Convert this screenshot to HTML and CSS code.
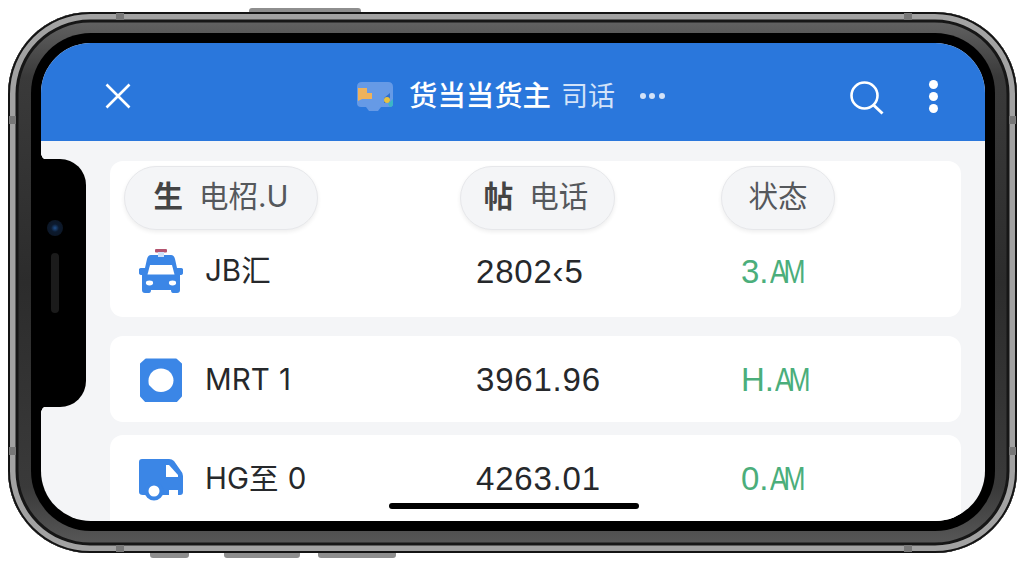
FILE: index.html
```html
<!DOCTYPE html>
<html lang="zh">
<head>
    <meta charset="UTF-8">
    <meta name="viewport" content="width=device-width, initial-scale=1.0">
    <link rel="stylesheet" href="styles.css">
    <title>货当当货主 司话</title>
</head>
<body>
    <div class="phone">
        <span class="side-btn btn-top"></span>
        <span class="side-btn btn-bottom-1"></span>
        <span class="side-btn btn-bottom-2"></span>
        <span class="side-btn btn-bottom-3"></span>
        <span class="band band-h band-t1"></span>
        <span class="band band-h band-t2"></span>
        <span class="band band-h band-b1"></span>
        <span class="band band-h band-b2"></span>
        <span class="band band-v band-l1"></span>
        <span class="band band-v band-l2"></span>
        <span class="band band-v band-r1"></span>
        <span class="band band-v band-r2"></span>

        <div class="screen">
            <header class="app-bar">
                <svg class="icon-close" viewBox="0 0 26 26" width="26" height="26">
                    <path d="M1.5 1.5 L24.5 24.5 M24.5 1.5 L1.5 24.5" stroke="#fff" stroke-width="2.6" fill="none"/>
                </svg>
                <svg class="logo" viewBox="0 0 36 29" width="36" height="29">
                    <path d="M5 0 H31 Q36 0 36 5 V22 Q36 25 32 25 H24 L21 29 H12 L9 25 H4 Q0 25 0 21 V5 Q0 0 5 0 Z" fill="#669ae6"/>
                    <path d="M1 6 H10 V11 H15 V17 H5 L1 19 Z" fill="#eeb25c"/>
                    <path d="M27 16 L33 11 V20 L27 21 Z" fill="#2f6fd0"/>
                    <circle cx="30" cy="18" r="3" fill="#e8c23e"/>
                    <path d="M31 22 L36 17 V22 Q36 25 33 25 Z" fill="#3cb6c6"/>
                </svg>
                <span class="title">货当当货主</span>
                <span class="subtitle">司话</span>
                <span class="more-dots"><i></i><i></i><i></i></span>
                <svg class="icon-search" viewBox="0 0 34 34" width="34" height="34">
                    <circle cx="14.5" cy="14.5" r="13" stroke="#fff" stroke-width="2.6" fill="none"/>
                    <path d="M23.5 24 L32.5 32.5" stroke="#fff" stroke-width="3" fill="none"/>
                </svg>
                <span class="kebab"><i></i><i></i><i></i></span>
            </header>

            <main class="content">
                <section class="card card-first">
                    <div class="pill-row">
                        <div class="pill pill-driver"><b>生</b>电柖.U</div>
                        <div class="pill pill-phone"><b>帖</b>电话</div>
                        <div class="pill pill-status">状态</div>
                    </div>
                    <div class="row row-first">
                        <div class="name">
                            <svg class="row-icon" viewBox="0 0 44 44" width="44" height="44">
                                <rect x="16" y="0" width="12" height="3.5" rx="1" fill="#b4546f"/>
                                <path d="M12 6 H32 Q35 6 36 10 L38 19 H42 Q45 19 44 24 Q44 26 41 26 V41 Q41 44 38 44 H34 Q32 44 32 41 H12 Q12 44 10 44 H6 Q3 44 3 41 V26 Q0 26 0 24 Q-1 19 2 19 H6 L8 10 Q9 6 12 6 Z" fill="#3b86e6"/>
                                <rect x="19" y="3" width="6" height="5" fill="#cfe2fa"/>
                                <path d="M11 16 H33 L35.500 25.500 H8.500 Z" fill="#fff"/>
                                <ellipse cx="10.5" cy="34" rx="3.6" ry="2.4" fill="#fff"/>
                                <ellipse cx="33.5" cy="34" rx="3.6" ry="2.4" fill="#fff"/>
                            </svg>
                            <span>JB汇</span>
                        </div>
                        <div class="amount">2802‹5</div>
                        <div class="status">3.<span class="am">AM</span></div>
                    </div>
                </section>

                <section class="card">
                    <div class="row">
                        <div class="name">
                            <svg class="row-icon" viewBox="0 0 44 44" width="44" height="44">
                                <path d="M7 1.500 H37 L42 6 V38 L37 43.500 H7 L2 38 V6 Z" fill="#3b86e6" stroke="#3b86e6" stroke-width="2" stroke-linejoin="round"/>
                                <path d="M22 10.500 C29 10.500 34.500 16 34.500 22.500 C34.500 29 29 34 22 34 C18 34 16 33 14 31 L10 27 C9.500 25 9.500 24 9.500 22.500 C9.500 16 15 10.500 22 10.500 Z" fill="#fff"/>
                            </svg>
                            <span>MRT 1</span>
                        </div>
                        <div class="amount">3961.96</div>
                        <div class="status">H.<span class="am">AM</span></div>
                    </div>
                </section>

                <section class="card card-last">
                    <div class="row">
                        <div class="name">
                            <svg class="row-icon" viewBox="0 0 44 44" width="44" height="44">
                                <path d="M3 2 H30 Q33 2 35 4 L42 14 Q44 16 44 19 V35 Q44 38 41 38 H4 Q0 38 0 35 V5 Q0 2 3 2 Z" fill="#3b86e6"/>
                                <path d="M27 8 H30 L39 18 V20 H27 Z" fill="#fff"/>
                                <rect x="30" y="33" width="9" height="6" fill="#fff"/>
                                <circle cx="15" cy="34" r="9.500" fill="#3b86e6"/>
                                <circle cx="15" cy="34" r="5.500" fill="#fff"/>
                            </svg>
                            <span>HG至 0</span>
                        </div>
                        <div class="amount">4263.01</div>
                        <div class="status">0.<span class="am">AM</span></div>
                    </div>
                </section>
            </main>

            <div class="notch">
                <span class="camera"></span>
                <span class="speaker"></span>
            </div>
            <div class="home-bar"></div>
        </div>
    </div>
</body>
</html>
```

FILE: styles.css
```css
* {
    box-sizing: border-box;
}

body {
    margin: 0;
    width: 1024px;
    height: 576px;
    overflow: hidden;
    background-color: #fff;
    font-family: Inter, "Noto Sans CJK SC", sans-serif;
}

/* device frame */
.phone {
    position: relative;
    width: 1009px;
    height: 541px;
    margin: 12px 0 0 8px;
    padding: 31px 32px 32px 33px;
    border-radius: 82px;
    background: linear-gradient(#686868 0, #3a3a3a 12%, #2c2c2c 50%, #3a3a3a 88%, #5c5c5c 100%);
    box-shadow:
        inset 0 0 0 2px #141414,
        inset 0 0 0 7.5px #a2a2a2,
        inset 0 0 0 10.5px #161616;
}

.side-btn {
    position: absolute;
    background-color: #8e8e8e;
    z-index: -1;
}

.btn-top {
    left: 241px;
    top: -4px;
    width: 112px;
    height: 8px;
    border-radius: 3px 3px 0 0;
}

.btn-bottom-1,
.btn-bottom-2,
.btn-bottom-3 {
    bottom: -5px;
    height: 9px;
    border-radius: 0 0 3px 3px;
}

.btn-bottom-1 {
    left: 142px;
    width: 39px;
}

.btn-bottom-2 {
    left: 216px;
    width: 76px;
}

.btn-bottom-3 {
    left: 310px;
    width: 78px;
}

.band {
    position: absolute;
    background-color: #777;
}

.band-h {
    width: 8px;
    height: 7px;
}

.band-v {
    width: 7px;
    height: 8px;
}

.band-t1 { left: 108px; top: 1px; }
.band-t2 { left: 896px; top: 1px; }
.band-b1 { left: 108px; bottom: 1px; }
.band-b2 { left: 896px; bottom: 1px; }
.band-l1 { left: 1px; top: 104px; }
.band-l2 { left: 1px; top: 435px; }
.band-r1 { right: 1px; top: 104px; }
.band-r2 { right: 1px; top: 435px; }

.screen {
    position: relative;
    width: 944px;
    height: 478px;
    border-radius: 50px;
    overflow: hidden;
    background-color: #f4f5f7;
    box-shadow: 0 0 0 10px #000;
}

/* blue top bar */
.app-bar {
    display: flex;
    align-items: center;
    height: 98px;
    padding: 8px 47px 0 64px;
    background-color: #2a77dc;
    color: #fff;
    line-height: 1;
}

.logo {
    margin-left: 226px;
}

.title {
    margin-left: 16px;
    font-size: 28.4px;
    font-weight: 500;
    white-space: nowrap;
}

.subtitle {
    margin-left: 10px;
    font-size: 27px;
    color: #d3e3f9;
    white-space: nowrap;
}

.more-dots {
    display: flex;
    gap: 3.5px;
    margin-left: 25px;
}

.more-dots i {
    width: 6px;
    height: 6px;
    border-radius: 50%;
    background-color: #d3e2f8;
}

.icon-search {
    margin-left: auto;
    margin-top: 4px;
}

.kebab {
    display: flex;
    flex-direction: column;
    gap: 3px;
    margin-left: 45px;
}

.kebab i {
    width: 9px;
    height: 9px;
    border-radius: 50%;
    background-color: #fff;
}

/* list */
.content {
    display: flex;
    flex-direction: column;
    gap: 13px;
    padding: 20px 24px 0 69px;
}

.card {
    flex-shrink: 0;
    height: 86px;
    border-radius: 13px;
    background-color: #fff;
}

.card-first {
    height: 156px;
    margin-bottom: 6px;
    padding-top: 5px;
}

.card-last {
    height: 110px;
}

.pill-row {
    display: grid;
    grid-template-columns: 336px 261px 114px;
    padding-left: 14px;
}

.pill {
    display: flex;
    align-items: center;
    justify-content: center;
    height: 64px;
    padding-bottom: 2px;
    border: 1px solid #e6e7ea;
    border-radius: 32px;
    background-color: #f4f5f7;
    box-shadow: 0 2px 4px rgba(0, 0, 0, 0.07);
    color: #55585c;
    font-size: 29.5px;
    line-height: 1;
    white-space: nowrap;
}

.pill b {
    margin-right: 16px;
    color: #444;
}

.pill-driver {
    width: 194px;
}

.pill-phone {
    width: 155px;
    padding-right: 3px;
}

.row {
    display: grid;
    grid-template-columns: 366px 265px 1fr;
    align-items: center;
    height: 87px;
    color: #26282b;
    line-height: 1;
}

.row-first {
    height: 82px;
}

.name {
    display: flex;
    align-items: center;
    gap: 22px;
    padding-left: 29px;
    font-size: 29.5px;
    word-spacing: 1px;
    white-space: nowrap;
}

.amount,
.status {
    font-family: "Liberation Sans", sans-serif;
    font-size: 33px;
}

.amount {
    letter-spacing: 0.8px;
}

.status {
    color: #4bae7b;
}

.am {
    display: inline-block;
    margin-left: 1px;
    letter-spacing: -5px;
    transform: scaleX(0.8);
    transform-origin: left center;
}

/* things lying over the screen */
.notch {
    position: absolute;
    left: 0;
    top: 116px;
    width: 45px;
    height: 248px;
    border-radius: 0 26px 26px 0;
    background-color: #000;
}

.notch::before,
.notch::after {
    content: "";
    position: absolute;
    left: 0;
    width: 6px;
    height: 5px;
}

.notch::before {
    top: -5px;
    background: radial-gradient(circle at 100% 0, transparent 5.5px, #000 6px);
}

.notch::after {
    bottom: -5px;
    background: radial-gradient(circle at 100% 100%, transparent 5.5px, #000 6px);
}

.camera {
    position: absolute;
    left: 6px;
    top: 61px;
    width: 16px;
    height: 16px;
    border-radius: 50%;
    background: radial-gradient(circle, #1f4f8c 0, #0c1a2e 35%, #0c1420 100%);
}

.speaker {
    position: absolute;
    left: 10px;
    top: 94px;
    width: 8px;
    height: 60px;
    border-radius: 4px;
    background-color: #1b1b1b;
}

.home-bar {
    position: absolute;
    left: 348px;
    bottom: 12px;
    width: 250px;
    height: 6px;
    border-radius: 3px;
    background-color: #000;
}
```
